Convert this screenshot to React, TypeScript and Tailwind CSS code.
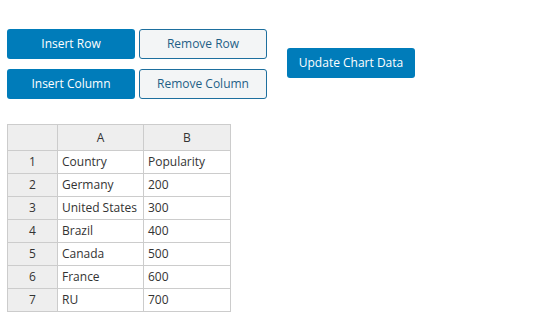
import React from "react";

const rows: [string, string, string][] = [
  ["1", "Country", "Popularity"],
  ["2", "Germany", "200"],
  ["3", "United States", "300"],
  ["4", "Brazil", "400"],
  ["5", "Canada", "500"],
  ["6", "France", "600"],
  ["7", "RU", "700"],
];

export default function App() {
  const font = { fontFamily: '"Open Sans", "Noto Sans", sans-serif' };
  const primary =
    "w-[128px] h-[30px] rounded-[3px] bg-[#007cba] text-white text-[12px] flex items-center justify-center";
  const secondary =
    "w-[128px] h-[30px] rounded-[3px] bg-[#f3f5f6] border border-[#1d6f9e] text-[#1f5f86] text-[12px] flex items-center justify-center";
  return (
    <div className="w-[547px] h-[326px] bg-white" style={font}>
      <div className="flex items-center pl-[7px] pt-[29px]">
        <div className="flex flex-col gap-[10px]">
          <div className="flex gap-[4px]">
            <button className={primary}>Insert Row</button>
            <button className={secondary}>Remove Row</button>
          </div>
          <div className="flex gap-[4px]">
            <button className={primary}>Insert Column</button>
            <button className={secondary}>Remove Column</button>
          </div>
        </div>
        <button className={primary + " ml-[20px] -mt-[2px]"}>Update Chart Data</button>
      </div>
      <table className="ml-[7px] mt-[25px] border-collapse text-[12px] text-[#333]">
        <thead>
          <tr className="h-[26px] bg-[#eeeeee]">
            <th className="w-[50px] border border-[#cccccc] font-normal"></th>
            <th className="w-[86px] border border-[#cccccc] font-normal text-center">A</th>
            <th className="w-[87px] border border-[#cccccc] font-normal text-center">B</th>
          </tr>
        </thead>
        <tbody>
          {rows.map((r) => (
            <tr key={r[0]} className="h-[23px]">
              <td className="border border-[#cccccc] bg-[#eeeeee] text-center p-0">{r[0]}</td>
              <td className="border border-[#cccccc] bg-white px-[4px] py-0 whitespace-nowrap">{r[1]}</td>
              <td className="border border-[#cccccc] bg-white px-[4px] py-0">{r[2]}</td>
            </tr>
          ))}
        </tbody>
      </table>
    </div>
  );
}
